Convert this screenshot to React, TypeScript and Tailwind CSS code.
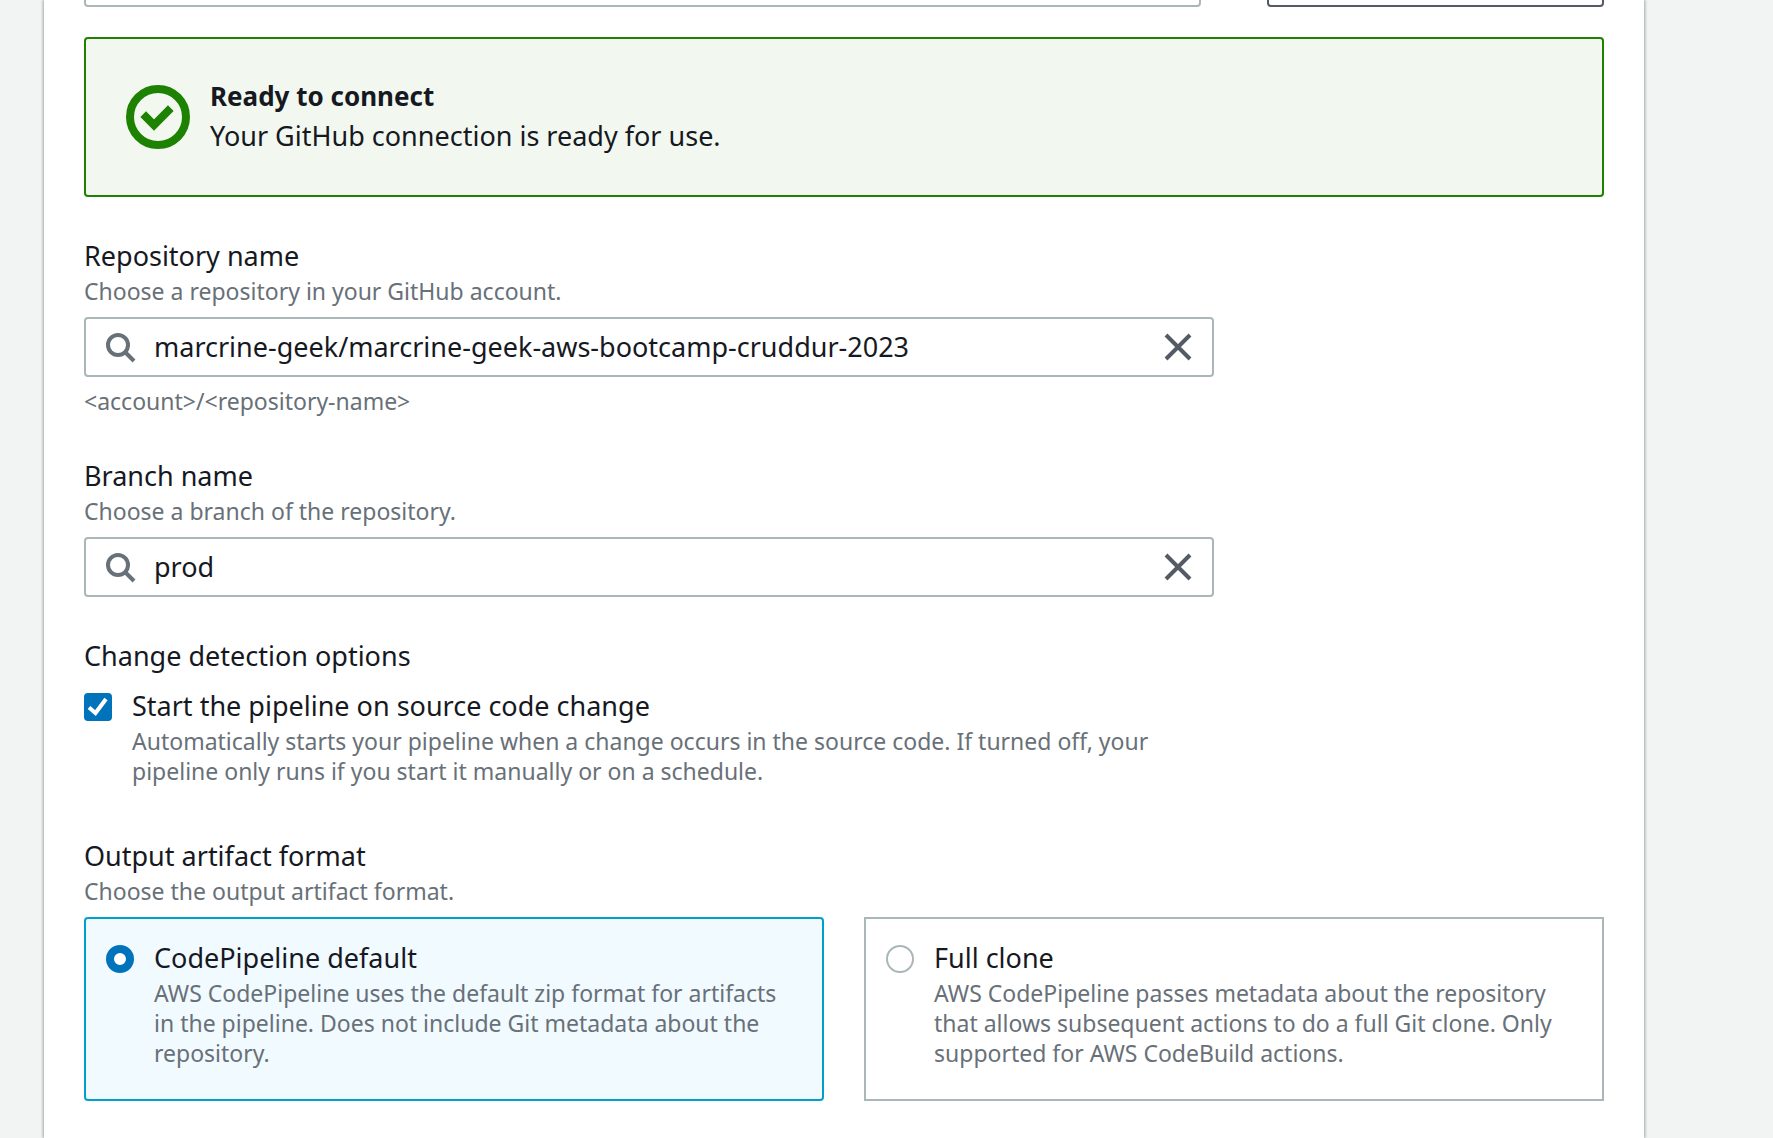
import { useState } from "react";

function SearchIcon() {
  return (
    <svg viewBox="0 0 16 16" className="size-8 shrink-0 text-[#687078]" fill="none" stroke="currentColor" strokeWidth="2" aria-hidden="true">
      <circle cx="7" cy="7" r="5" />
      <path d="M15 15l-4.5-4.5" />
    </svg>
  );
}

function CloseIcon() {
  return (
    <svg viewBox="0 0 16 16" className="size-8" fill="none" stroke="currentColor" strokeWidth="2" aria-hidden="true">
      <path d="M2 2l12 12M14 2L2 14" />
    </svg>
  );
}

function SuccessIcon() {
  return (
    <svg viewBox="0 0 16 16" className="size-16 shrink-0 text-[#1d8102]" fill="none" stroke="currentColor" strokeWidth="2" aria-hidden="true">
      <circle cx="8" cy="8" r="7" />
      <path d="M4.3 7.3L7 10l4.2-4.2" />
    </svg>
  );
}

type SearchFieldProps = {
  id: string;
  label: string;
  description: string;
  initial: string;
  hint?: string;
};

function SearchField({ id, label, description, initial, hint }: SearchFieldProps) {
  const [value, setValue] = useState(initial);
  return (
    <div className="max-w-[1130px]">
      <label htmlFor={id} className="block pb-px text-[27px] leading-[38px]">{label}</label>
      <p className="text-[23px] leading-[30px] text-[#687078]">{description}</p>
      <div className="mt-[11px] flex h-[60px] items-center rounded-sm border-2 border-[#aab7b8] bg-white px-[18px]">
        <SearchIcon />
        <input
          id={id}
          type="text"
          value={value}
          onChange={(e) => setValue(e.target.value)}
          className="mx-[18px] h-full min-w-0 flex-1 bg-transparent pb-0.5 text-[27px] outline-none"
        />
        <button type="button" aria-label={`Clear ${label}`} onClick={() => setValue("")} className="text-[#545b64]">
          <CloseIcon />
        </button>
      </div>
      {hint && <p className="mt-[9px] pb-px text-[23px] leading-[30px] text-[#687078]">{hint}</p>}
    </div>
  );
}

type TileProps = {
  id: string;
  label: string;
  description: string;
  checked: boolean;
  onSelect: () => void;
};

function Tile({ id, label, description, checked, onSelect }: TileProps) {
  return (
    <label
      htmlFor={id}
      className={
        checked
          ? "flex gap-5 rounded-sm border-2 border-[#00a1c9] bg-[#f1faff] pt-5 pr-6 pb-[31px] pl-5"
          : "flex gap-5 border-2 border-[#aab7b8] bg-white pt-5 pr-6 pb-[31px] pl-5"
      }
    >
      <input
        id={id}
        type="radio"
        name="artifact-format"
        checked={checked}
        onChange={onSelect}
        className="mt-1.5 size-7 shrink-0 appearance-none rounded-full border-2 border-[#aab7b8] bg-white checked:border-8 checked:border-[#0073bb]"
      />
      <span className="min-w-0">
        <span className="block pb-px text-[27px] leading-[38px]">{label}</span>
        <span className="block text-[23px] leading-[30px] text-[#687078]">{description}</span>
      </span>
    </label>
  );
}

export default function App() {
  const [detect, setDetect] = useState(true);
  const [format, setFormat] = useState("default");

  return (
    <div className="min-h-screen overflow-hidden bg-[#f2f3f3] font-['Noto_Sans',sans-serif] text-[#16191f]">
      <main className="mr-[129px] ml-11 min-h-screen bg-white px-10 pb-[37px] shadow-[0_0_2px_0_rgba(0,28,36,0.3),2px_0_2px_0_rgba(0,28,36,0.15),-2px_0_2px_0_rgba(0,28,36,0.15)]">
        <div className="flex h-[7px] items-end gap-[66px] overflow-hidden">
          <input aria-label="Connection" className="h-[60px] min-w-0 flex-1 rounded-[4px] border-2 border-[#aab7b8] bg-white px-5 text-[27px]" />
          <button type="button" aria-label="Connect to GitHub" className="h-[60px] w-[337px] rounded-[4px] border-2 border-[#545b64] bg-white" />
        </div>

        <section className="mt-[30px] flex h-40 items-center gap-5 rounded-sm border-2 border-[#1d8102] bg-[#f2f8f0] px-10">
          <SuccessIcon />
          <div className="pb-0.5 leading-10">
            <h2 className="text-[26px] font-bold">Ready to connect</h2>
            <p className="text-[27px]">Your GitHub connection is ready for use.</p>
          </div>
        </section>

        <form className="mt-10 flex flex-col gap-10">
          <SearchField
            id="repository"
            label="Repository name"
            description="Choose a repository in your GitHub account."
            initial="marcrine-geek/marcrine-geek-aws-bootcamp-cruddur-2023"
            hint="<account>/<repository-name>"
          />
          <SearchField
            id="branch"
            label="Branch name"
            description="Choose a branch of the repository."
            initial="prod"
          />

          <fieldset className="max-w-[1130px]">
            <legend className="pb-px text-[27px] leading-[38px]">Change detection options</legend>
            <div className="mt-[11px] flex gap-5 pb-px">
              <span className="relative mt-1.5 size-7 shrink-0">
                <input
                  id="detect"
                  type="checkbox"
                  checked={detect}
                  onChange={(e) => setDetect(e.target.checked)}
                  className="peer block size-7 appearance-none rounded-[4px] border-2 border-[#aab7b8] bg-white checked:border-[#0073bb] checked:bg-[#0073bb]"
                />
                <svg viewBox="0 0 28 28" className="pointer-events-none absolute inset-0 hidden size-7 peer-checked:block" fill="none" stroke="white" strokeWidth="4" aria-hidden="true">
                  <path d="M5 14.5L11.5 20L22 6" />
                </svg>
              </span>
              <label htmlFor="detect" className="min-w-0">
                <span className="block pb-px text-[27px] leading-[38px]">Start the pipeline on source code change</span>
                <span className="block text-[23px] leading-[30px] text-[#687078]">
                  Automatically starts your pipeline when a change occurs in the source code. If turned off, your pipeline only runs if you start it manually or on a schedule.
                </span>
              </label>
            </div>
          </fieldset>

          <fieldset className="mt-2.5">
            <legend className="pb-px text-[27px] leading-[38px]">Output artifact format</legend>
            <p className="text-[23px] leading-[30px] text-[#687078]">Choose the output artifact format.</p>
            <div className="mt-[11px] grid grid-cols-2 gap-10">
              <Tile
                id="format-default"
                label="CodePipeline default"
                description="AWS CodePipeline uses the default zip format for artifacts in the pipeline. Does not include Git metadata about the repository."
                checked={format === "default"}
                onSelect={() => setFormat("default")}
              />
              <Tile
                id="format-clone"
                label="Full clone"
                description="AWS CodePipeline passes metadata about the repository that allows subsequent actions to do a full Git clone. Only supported for AWS CodeBuild actions."
                checked={format === "clone"}
                onSelect={() => setFormat("clone")}
              />
            </div>
          </fieldset>
        </form>
      </main>
    </div>
  );
}
